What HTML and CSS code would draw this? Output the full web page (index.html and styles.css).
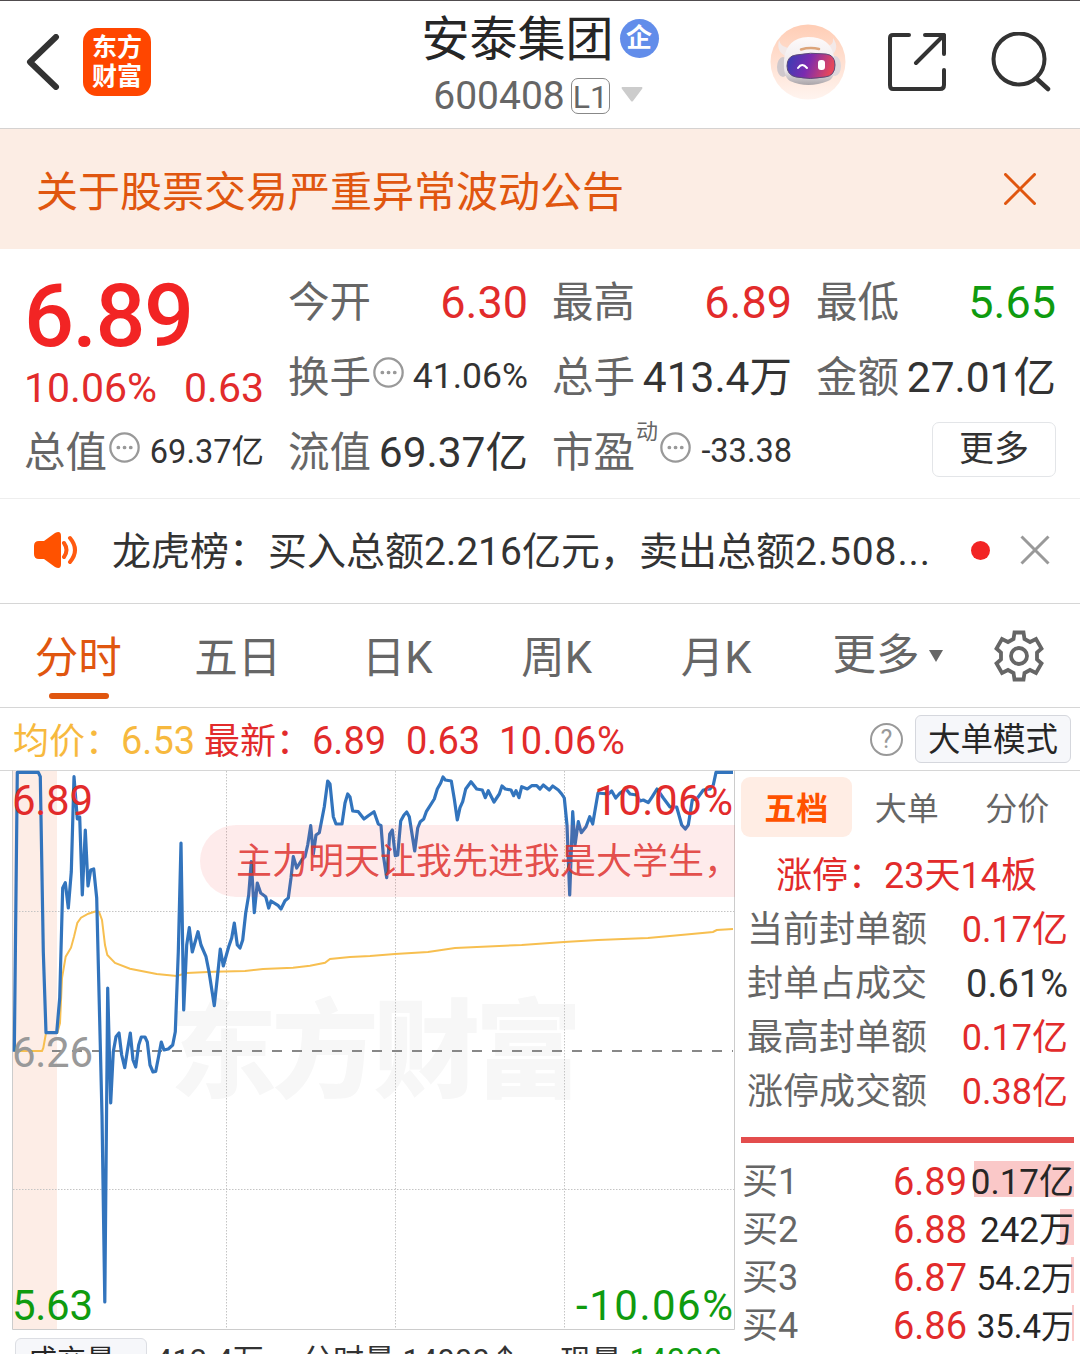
FILE: index.html
```html
<!DOCTYPE html>
<html lang="zh-CN">
<head>
    <meta charset="UTF-8">
    <meta name="viewport" content="width=device-width, initial-scale=1.0">
    <title>安泰集团 600408</title>
    <link rel="stylesheet" href="styles.css">
</head>
<body>
    <!-- Header -->
    <header class="header">
        <div class="header-left">
            <svg class="back" width="34" height="56" viewBox="0 0 34 56"><path d="M30 3 L4 28 L30 53" fill="none" stroke="#333" stroke-width="6" stroke-linecap="round" stroke-linejoin="round"/></svg>
            <div class="logo"><span>东方</span><span>财富</span></div>
        </div>
        <div class="header-title">
            <div class="name-row"><h1>安泰集团</h1><span class="badge">企</span></div>
            <div class="code-row">
                <span>600408</span><span class="level">L1</span>
                <svg width="22" height="15" viewBox="0 0 22 15"><path d="M1 0 H21 Q22 1 21 2 L12 14 Q11 15 10 14 L1 2 Q0 1 1 0Z" fill="#ccc"/></svg>
            </div>
        </div>
        <div class="header-right">
            <svg width="76" height="76" viewBox="0 0 76 76">
                <defs>
                    <linearGradient id="halo" x1="0" y1="0" x2="0" y2="1"><stop offset="0" stop-color="#ffcdb5"/><stop offset="1" stop-color="#fff4ef"/></linearGradient>
                    <linearGradient id="visor" x1="0" y1="0" x2="1" y2="0.2"><stop offset="0" stop-color="#3340b4"/><stop offset="0.5" stop-color="#7a2bb0"/><stop offset="1" stop-color="#e5465c"/></linearGradient>
                    <linearGradient id="shell" x1="0" y1="0" x2="0" y2="1"><stop offset="0" stop-color="#fdfafa"/><stop offset="0.7" stop-color="#ece7ea"/><stop offset="1" stop-color="#a9a4a8"/></linearGradient>
                </defs>
                <circle cx="38" cy="38" r="37.5" fill="url(#halo)"/>
                <path d="M9 16 Q6 28 16 32 L21 24 Q11 24 9 16Z M63 14 Q70 24 62 31 L55 23 Q64 22 63 14Z" fill="#f3e9e8"/>
                <ellipse cx="13" cy="43" rx="6" ry="10" fill="#cfc8cc"/>
                <ellipse cx="65" cy="42" rx="6" ry="10" fill="#ded8dc"/>
                <path d="M14 36 Q16 14 38 13 Q61 13 64 33 Q67 54 58 57 Q38 65 20 57 Q13 53 14 36Z" fill="url(#shell)"/>
                <path d="M26 31 Q40 28 56 30 Q65 31 65 41 Q65 52 55 53 Q40 56 26 53 Q17 51 17 42 Q17 32 26 31Z" fill="url(#visor)" stroke="#5b4a78"/>
                <path d="M31 25.500 Q40 23 49 25" fill="none" stroke="#dca47a" stroke-width="2.500" stroke-linecap="round"/>
                <path d="M28 44 Q32 38 37 44" fill="none" stroke="#fff" stroke-width="2" stroke-linecap="round"/>
                <rect x="48" y="36" width="7" height="10" rx="3" fill="#fff"/>
            </svg>
            <svg class="share" width="58" height="58" viewBox="0 0 58 58"><path d="M21 2 H5 Q2 2 2 5 V52 Q2 56 5 56 H52 Q56 56 56 52 V37 M37 2 H56 V21 M56 2 L28 30" fill="none" stroke="#333" stroke-width="4" stroke-linecap="round" stroke-linejoin="round"/></svg>
            <svg class="search" width="60" height="60" viewBox="0 0 60 60"><path d="M46 47 L57 57" stroke="#333" stroke-width="4.5" stroke-linecap="round"/><circle cx="28" cy="27" r="25.500" fill="none" stroke="#333" stroke-width="4"/></svg>
        </div>
    </header>

    <!-- Announcement -->
    <div class="notice">
        <span>关于股票交易严重异常波动公告</span>
        <svg width="32" height="32" viewBox="0 0 32 32"><path d="M1.5 1.5 L30.5 30.5 M30.5 1.5 L1.5 30.5" stroke="#e0560f" stroke-width="3" stroke-linecap="round"/></svg>
    </div>

    <!-- Quote -->
    <section class="quote">
        <div class="quote-col">
            <div class="price-box">
                <div class="price">6.89</div>
                <div class="change"><span>10.06%</span><span>0.63</span></div>
            </div>
            <div class="cell"><label>总值</label><svg class="dots" viewBox="0 0 30 30"><circle cx="15" cy="15" r="13.7"/><path d="M9 15h.1M15 15h.1M21 15h.1"/></svg><b class="small">69.37亿</b></div>
        </div>
        <div class="quote-col">
            <div class="cell"><label>今开</label><b class="big red">6.30</b></div>
            <div class="cell"><label>换手</label><svg class="dots" viewBox="0 0 30 30"><circle cx="15" cy="15" r="13.7"/><path d="M9 15h.1M15 15h.1M21 15h.1"/></svg><b class="mid">41.06%</b></div>
            <div class="cell"><label>流值</label><b>69.37亿</b></div>
        </div>
        <div class="quote-col">
            <div class="cell"><label>最高</label><b class="big red">6.89</b></div>
            <div class="cell"><label>总手</label><b>413.4万</b></div>
            <div class="cell"><label>市盈</label><sup>动</sup><svg class="dots" viewBox="0 0 30 30"><circle cx="15" cy="15" r="13.7"/><path d="M9 15h.1M15 15h.1M21 15h.1"/></svg><b class="small pe">-33.38</b></div>
        </div>
        <div class="quote-col">
            <div class="cell"><label>最低</label><b class="big green">5.65</b></div>
            <div class="cell"><label>金额</label><b>27.01亿</b></div>
            <div class="cell"><button class="more">更多</button></div>
        </div>
    </section>

    <!-- News line -->
    <div class="news">
        <svg width="46" height="38" viewBox="0 0 46 38"><path d="M1 15 Q1 10 6 10 H11 L22 2 Q28 -1 28 5 V33 Q28 39 22 36 L11 28 H6 Q1 28 1 23Z" fill="#ff5200"/><path d="M31 12 Q36 19 31 26 M37 7 Q47 19 37 31" fill="none" stroke="#ff5a10" stroke-width="4" stroke-linecap="round"/></svg>
        <p>龙虎榜：买入总额2.216亿元，卖出总额<span>2.508...</span></p>
        <i class="dot"></i>
        <svg width="30" height="30" viewBox="0 0 30 30"><path d="M1.5 1.5 L28.5 28.5 M28.5 1.5 L1.5 28.5" stroke="#999" stroke-width="3"/></svg>
    </div>

    <!-- Period tabs -->
    <nav class="tabs">
        <a class="tab active">分时</a>
        <a class="tab">五日</a>
        <a class="tab">日K</a>
        <a class="tab">周K</a>
        <a class="tab">月K</a>
        <a class="tab-more">更多<i class="caret"></i></a>
        <svg width="52" height="52" viewBox="0 0 52 52" fill="none" stroke="#666" stroke-width="3.8">
            <path d="M21.5 2.5H30.5L31.5 9L37 12L43 9L48.5 18.5L44 22.5V29.5L48.5 33.5L43 43L37 40L31.5 43L30.5 49.5H21.5L20.5 43L15 40L9 43L3.5 33.5L8 29.5V22.5L3.5 18.5L9 9L15 12L20.5 9Z"/>
            <circle cx="26" cy="26" r="8"/>
        </svg>
    </nav>

    <!-- Average / latest -->
    <div class="info">
        <span class="avg"><em>均价：</em>6.53</span>
        <span class="latest"><em>最新：</em>6.89</span>
        <span class="diff">0.63</span>
        <span class="pct">10.06%</span>
        <i class="help">?</i>
        <button class="mode">大单模式</button>
    </div>

    <main class="main">
        <div class="left">
            <div class="chart">
                <svg width="735" height="560" viewBox="0 770 735 560">
                    <rect x="13" y="771" width="44" height="558" fill="#fdede6"/>
                    <text class="watermark" x="170" y="1089" textLength="412">东方财富</text>
                    <path d="M226.5 771V1329M395.5 771V1329M564.5 771V1329M13 911.5H734M13 1189.5H734" stroke="#c4c4c4" stroke-dasharray="1.5 1.5"/>
                    <path d="M52 1051H733" stroke="#888" stroke-width="2" stroke-dasharray="10 10"/>
                    <path d="M12.500 770V1329.500H734.500V770" fill="none" stroke="#ccc"/>
                    <polyline class="avg-line" points="14,1051 42,1051 43.3,1048 46,1033 57.3,1033 60,1023 62,978 65.7,956.7 71,947.7 74,936.7 77.3,923 81,917.7 88.3,913.7 96.7,911 99,911.7 102,920 105,945 107.3,955 115,963 130,968.7 156.7,974 176.7,976 186.7,973 213.3,971.7 245,971 263,969 293,967.7 310,965.7 325,962.7 330,959 350,957 370,956 395,954 428,952 455,948 521.7,945 564,942 598,940 648,938 691.7,934 713,932 716.7,930 733,929"/>
                    <polyline class="price-line" points="14.3,1051.7 17.3,772.3 38.3,772.3 40.3,776.7 43.3,951.7 46,1032.7 56.7,1032.7 59.7,998 62.7,888 65.3,882.7 68.3,908 71.3,871.7 74,776.7 77.3,819 79.7,817 82.3,895 85.3,830 88,886 90.7,870 93.7,869 96.7,898 102,1115 104.8,1302 107.7,988 110.7,1103 113.3,1051.7 116,1036.7 119,1033 121.7,1055 124.7,1067.7 127.3,1051 130.3,1033 133,1060 135.7,1067 138.7,1045 141.3,1037 145,1037 147.3,1042 150,1065 153,1072 155.7,1071.5 158.3,1058 161.3,1042 164,1050 168.3,1049 172.7,1045 175.3,1031.7 178.3,951.7 181,843 183.7,1010 186.7,945 189.3,927.7 192.3,952 198,931.7 201,945 206,956.7 209,971.7 214.3,1005.7 217.3,978 220.3,949 223.3,966 228.7,946.7 231.7,938 234.3,923 237.3,945 240,948 242.7,940 245.7,913 248.7,895 251.3,861.7 254.3,912.7 257.3,883 260.7,893 265.7,896.7 268.7,908 271,901 278.3,905.7 281,909 285,900.7 288.3,898 291,878 293.3,856.7 296.7,868 301.7,860 305,856.7 307.7,845 310.7,825.7 313.3,854 316,835 319.3,832.7 324.3,806.7 327.7,781 330,784 333.3,816.7 336,824 342,824 345,803 347.7,794 350,797 352.7,811 358.3,811.7 364,819 368.3,815.7 374,811.7 378.3,824 381,825.7 383.3,855 386.7,877.7 389.7,834 392.3,830 395.3,855.7 397.7,855 400.7,821 404,815 406.7,812 409.3,816.7 414.7,851 417.7,828 420.3,821.7 423.7,819 426.3,811.7 434.3,799 437.3,789 440.7,783 443,777 445.3,780 451.3,781 454.3,799 457.3,820 460,807.7 462.7,801.7 465.7,789 471,781.7 476.7,789 482.3,790 485.3,797.7 488.3,790.7 494,802 499.3,794 502,786 505.3,789 511,790 513.7,795.7 516,790.7 519,797.7 521.7,786.7 527.3,789 531.7,785.7 536.7,785.7 540,789 543.3,785 549.3,790 552.7,786 558.3,790 561.7,794 564.3,798 567,825 569.7,895 572.7,811.7 575,845 578.3,821.7 581.3,832.7 586,826.7 589.7,816.7 592.7,824 598,793 608.3,794 611.7,791 615.7,798 620,793 626,789 630,794 636.7,795 640,801 643.3,800 648.3,802.7 652.3,796.7 657,789 663.3,798 670,807 676.7,807 681.7,825 685.3,829 688.3,825 692.3,800 697.7,797.7 703.3,790 710,789 713.3,785 716,772.3 733,772.3"/>
                    <g class="axis">
                        <text x="12" y="815" textLength="81" fill="#e22b2b">6.89</text>
                        <text x="594" y="815" textLength="139" fill="#e22b2b">10.06%</text>
                        <text x="12" y="1067" textLength="81" fill="#999">6.26</text>
                        <text x="12" y="1320" textLength="81" fill="#0f9b0f">5.63</text>
                        <text x="576" y="1320" textLength="157" fill="#0f9b0f">-10.06%</text>
                    </g>
                </svg>
                <div class="danmu">主力明天让我先进我是大学生，</div>
            </div>
            <div class="volume">
                <button class="vol-btn">成交量</button>
                <span class="vol-total">413.4万</span>
                <span class="vol-min">分时量:14000↑</span>
                <span class="vol-now">现量:<b class="green">14000</b></span>
            </div>
        </div>

        <!-- Order book -->
        <aside class="book">
            <div class="book-tabs"><a class="on">五档</a><a>大单</a><a>分价</a></div>
            <div class="limit">涨停：23天14板</div>
            <div class="stat"><span>当前封单额</span><b class="red">0.17亿</b></div>
            <div class="stat"><span>封单占成交</span><b class="pc">0.61%</b></div>
            <div class="stat"><span>最高封单额</span><b class="red">0.17亿</b></div>
            <div class="stat"><span>涨停成交额</span><b class="red">0.38亿</b></div>
            <div class="bar"></div>
            <div class="buy"><span>买1</span><b class="red">6.89</b><div class="vol"><i style="width: 100px"></i>0.17亿</div></div>
            <div class="buy"><span>买2</span><b class="red">6.88</b><div class="vol"><i style="width: 14px"></i>242万</div></div>
            <div class="buy"><span>买3</span><b class="red">6.87</b><div class="vol narrow"><i style="width: 3px"></i>54.2万</div></div>
            <div class="buy"><span>买4</span><b class="red">6.86</b><div class="vol narrow"><i style="width: 2px"></i>35.4万</div></div>
        </aside>
    </main>
</body>
</html>
```
FILE: styles.css
```css
* {
    box-sizing: border-box;
}
body {
    margin: 0;
    width: 1080px;
    height: 1354px;
    overflow: hidden;
    background-color: #fff;
    color: #333;
    font-family: Roboto, "Noto Sans CJK SC", sans-serif;
    display: flex;
    flex-direction: column;
}
svg {
    display: block;
    flex: none;
}
b, i, em, h1 {
    font-weight: normal;
    font-style: normal;
}
button {
    font-family: inherit;
    padding: 0;
    cursor: pointer;
}
.red {
    color: #e22b2b;
}
.green {
    color: #0f9b0f;
}

/* Header */
.header {
    flex: none;
    height: 129px;
    border-top: 1px solid #504c4e;
    border-bottom: 1px solid #d5d2d1;
    display: grid;
    grid-template-columns: 310px 1fr 310px;
}
.header-left {
    display: flex;
    align-items: center;
    padding: 0 0 6px 26px;
}
.logo {
    margin-left: 23px;
    width: 68px;
    height: 68px;
    border-radius: 14px;
    background-color: #ff4600;
    color: #fff;
    font-size: 25px;
    line-height: 29px;
    font-weight: 700;
    display: flex;
    flex-direction: column;
    align-items: center;
    justify-content: center;
}
.header-title {
    display: flex;
    flex-direction: column;
    align-items: center;
}
.name-row {
    display: flex;
    align-items: center;
    margin-top: 7px;
    height: 60px;
}
.name-row h1 {
    margin: 4px 0 0;
    font-size: 48px;
    line-height: 60px;
    color: #262626;
}
.badge {
    margin-left: 6px;
    width: 39px;
    height: 39px;
    border-radius: 50%;
    background-color: #628dea;
    color: #fff;
    font-size: 26px;
    font-weight: 700;
    line-height: 38px;
    text-align: center;
}
.code-row {
    display: flex;
    align-items: center;
    margin-top: 7px;
    margin-right: 4px;
    height: 42px;
    font-size: 39px;
    color: #666;
}
.code-row svg {
    margin-top: -4px;
}
.level {
    margin: 0 11px 0 6px;
    width: 39px;
    height: 36px;
    border: 1.5px solid #888;
    border-radius: 7px;
    font-size: 32px;
    line-height: 36px;
    text-align: center;
}
.header-right {
    display: flex;
    align-items: center;
    padding-bottom: 6px;
}
.share {
    margin-left: 42px;
}
.search {
    margin-left: 45px;
}

/* Announcement */
.notice {
    flex: none;
    height: 120px;
    padding: 0 44px 0 36px;
    background-color: #fcede4;
    color: #e0560f;
    font-size: 42px;
    display: flex;
    align-items: center;
    justify-content: space-between;
}
.notice span {
    margin-top: -1px;
}

/* Quote */
.quote {
    flex: none;
    height: 250px;
    padding: 15px 24px 0 24px;
    border-bottom: 1px solid #eee;
    display: flex;
    gap: 24px;
}
.quote-col {
    width: 240px;
}
.cell {
    height: 75px;
    display: flex;
    align-items: center;
    white-space: nowrap;
}
.cell label {
    margin-top: -5px;
    font-size: 41.5px;
    color: #666;
}
.cell b {
    margin-left: auto;
    margin-top: -6px;
    font-size: 42.5px;
}
.cell b.big {
    margin-top: 1px;
    font-size: 45px;
}
.cell b.mid {
    margin-top: -1px;
    font-size: 35.5px;
}
.cell b.small {
    font-size: 32.5px;
}
.cell b.pe {
    margin-top: -1px;
}
.cell sup {
    font-size: 22px;
    line-height: 22px;
    color: #666;
    align-self: flex-start;
    margin-top: 7px;
    margin-left: 1px;
}
.dots {
    width: 31px;
    height: 31px;
    margin: -9px 0 0 2px;
    fill: none;
    stroke: #999;
    stroke-width: 2.2;
}
.dots path {
    stroke-width: 3.6;
    stroke-linecap: round;
}
.price-box {
    height: 150px;
}
.price {
    height: 98px;
    font-size: 88px;
    font-weight: 500;
    line-height: 103px;
    color: #f22424;
    letter-spacing: -1.5px;
}
.change {
    height: 52px;
    line-height: 52px;
    font-size: 41px;
    color: #e22b2b;
    display: flex;
    justify-content: space-between;
}
.more {
    margin: -5px 0 0 auto;
    width: 124px;
    height: 55px;
    border: 1px solid #e3e5e8;
    border-radius: 7px;
    background-color: #fff;
    color: #333;
    font-size: 35px;
    line-height: 53px;
}

/* News line */
.news {
    flex: none;
    height: 105px;
    padding: 0 30px 2px 33px;
    border-bottom: 1px solid #d6d6d6;
    display: flex;
    align-items: center;
}
.news p {
    margin: -4px 0 0 33px;
    width: 860px;
    font-size: 39px;
    white-space: nowrap;
}
.news p span {
    letter-spacing: 0.9px;
}
.dot {
    flex: none;
    width: 19px;
    height: 19px;
    border-radius: 50%;
    background-color: #f22424;
    margin-right: 30px;
}

/* Period tabs */
.tabs {
    flex: none;
    height: 104px;
    border-bottom: 1px solid #d6d6d6;
    display: flex;
    align-items: center;
    font-size: 43.5px;
    color: #666;
}
.tab {
    position: relative;
    width: 159.5px;
    height: 103px;
    padding-right: 3px;
    line-height: 110px;
    text-align: center;
}
.tab.active {
    color: #e0560f;
}
.tab.active::after {
    content: "";
    position: absolute;
    left: 49px;
    bottom: 8px;
    width: 60px;
    height: 6px;
    border-radius: 3px;
    background-color: #e0560f;
}
.tab-more {
    width: 195px;
    height: 103px;
    padding-left: 35px;
    line-height: 110px;
    display: flex;
    align-items: center;
}
.caret {
    margin-left: 9px;
    margin-top: 1px;
    border: 7.5px solid transparent;
    border-top: 12px solid #666;
    border-bottom: 0;
}

/* Average / latest */
.info {
    flex: none;
    height: 63px;
    padding: 0 9px 0 13px;
    border-bottom: 1px solid #d6d6d6;
    display: flex;
    align-items: center;
    font-size: 38px;
    color: #e22b2b;
    white-space: nowrap;
}
.info em {
    font-size: 36px;
}
.avg, .latest {
    margin-top: -2px;
}
.avg {
    width: 191px;
    color: #f7b93e;
}
.latest {
    width: 202px;
}
.diff {
    width: 93px;
    margin-top: 3px;
}
.pct {
    margin-top: 3px;
    letter-spacing: 0.5px;
}
.help {
    margin-left: auto;
    width: 33px;
    height: 33px;
    border: 2px solid #999;
    border-radius: 50%;
    color: #999;
    font-size: 25px;
    line-height: 30px;
    text-align: center;
}
.mode {
    margin-left: 12px;
    width: 156px;
    height: 48px;
    border: 1px solid #d5d7dd;
    border-radius: 6px;
    background-color: #f6f7fa;
    color: #262626;
    font-size: 32.5px;
    line-height: 48px;
}

/* Chart */
.main {
    display: flex;
    height: 583px;
}
.left {
    width: 735px;
}
.chart {
    position: relative;
    height: 560px;
    margin-top: -1px;
}
.watermark {
    font-size: 107px;
    font-weight: 900;
    fill: #f7f7f7;
}
.avg-line {
    fill: none;
    stroke: #f7bf50;
    stroke-width: 2;
}
.price-line {
    fill: none;
    stroke: #3274bd;
    stroke-width: 3.2;
    stroke-linejoin: round;
}
.axis {
    font-size: 42px;
}
.danmu {
    position: absolute;
    left: 200px;
    top: 55px;
    width: 535px;
    height: 72px;
    padding-left: 36px;
    border-radius: 36px 0 0 36px;
    background-color: rgba(242, 60, 60, 0.1);
    color: rgba(222, 52, 48, 0.87);
    font-size: 36px;
    line-height: 74px;
    white-space: nowrap;
}
.volume {
    display: flex;
    padding: 8px 0 0 15px;
    font-size: 31px;
    line-height: 46px;
    white-space: nowrap;
}
.vol-btn {
    width: 132px;
    height: 46px;
    padding-left: 12px;
    border: 1px solid #dcdee3;
    border-radius: 6px;
    background-color: #f6f7fa;
    color: #262626;
    font-size: 29px;
    line-height: 34px;
    text-align: left;
}
.vol-total {
    margin-left: 8px;
    width: 147px;
}
.vol-min {
    width: 258px;
}
.vol-now b {
    font-size: 33px;
}

/* Order book */
.book {
    width: 345px;
    padding: 6px 6px 0 6px;
}
.book-tabs {
    display: flex;
    height: 60px;
    font-size: 32px;
    line-height: 65px;
    color: #666;
}
.book-tabs a {
    width: 110.5px;
    text-align: center;
}
.book-tabs .on {
    border-radius: 9px;
    background-color: #ffede4;
    color: #ff5200;
    font-weight: 700;
}
.limit {
    height: 65px;
    padding: 12px 0 0 35px;
    font-size: 36px;
    line-height: 55px;
    color: #e22b2b;
}
.stat {
    display: flex;
    justify-content: space-between;
    height: 54px;
    padding: 0 6px 0 6px;
    font-size: 36px;
    line-height: 57px;
    color: #666;
}
.stat .pc {
    font-size: 38px;
    color: #333;
}
.bar {
    height: 6px;
    margin: 19px 0 14px;
    background-color: #e34d4d;
}
.buy {
    display: flex;
    height: 48px;
    font-size: 36px;
    line-height: 51px;
    color: #666;
}
.buy span {
    flex: 1;
    padding-left: 1px;
}
.buy b {
    font-size: 38px;
}
.vol {
    position: relative;
    width: 107px;
    color: #262626;
    font-size: 35px;
    text-align: right;
    z-index: 0;
}
.vol.narrow {
    font-size: 33px;
}
.vol i {
    position: absolute;
    right: 0;
    top: 4px;
    height: 36px;
    background-color: #fac8c8;
    z-index: -1;
}
```
